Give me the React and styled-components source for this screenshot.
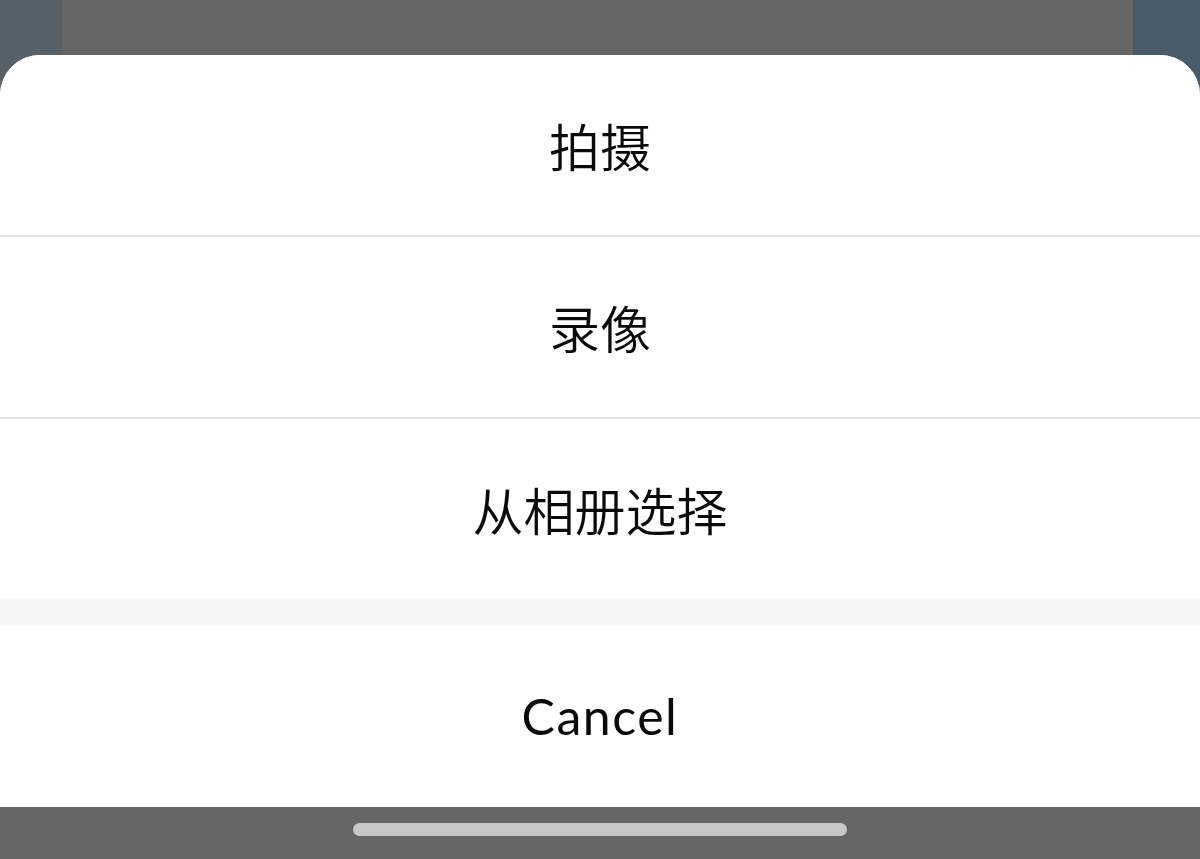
import styled, { createGlobalStyle } from "styled-components";

const GlobalStyle = createGlobalStyle`
  html, body {
    margin: 0;
    padding: 0;
    height: 100%;
  }
  body {
    font-family: "Noto Sans", "Noto Sans CJK SC", sans-serif;
  }
  #root {
    height: 100%;
  }
`;

const Page = styled.div`
  height: 859px;
  display: flex;
  flex-direction: column;
  overflow: hidden;
  background: linear-gradient(
    to right,
    #56616a 0,
    #56616a 62px,
    #666666 62px,
    #666666 1133px,
    #4a5b67 1133px
  );
`;

const Backdrop = styled.div`
  height: 55px;
  flex-shrink: 0;
`;

const Sheet = styled.div`
  flex: 1;
  display: flex;
  flex-direction: column;
  background: #ffffff;
  border-radius: 40px 40px 0 0;
  overflow: hidden;
`;

const Option = styled.button`
  height: ${(p) => p.$height}px;
  flex-shrink: 0;
  display: flex;
  align-items: center;
  justify-content: center;
  border: none;
  background: #ffffff;
  padding: 0;
  font-family: "Noto Sans CJK SC", sans-serif;
  font-size: 51px;
  font-weight: 350;
  color: #0a0a0a;
  cursor: pointer;

  & + & {
    border-top: 2px solid #e4e4e4;
  }
`;

const Spacer = styled.div`
  height: 26px;
  flex-shrink: 0;
  background: #f5f5f5;
`;

const CancelButton = styled(Option)`
  font-family: "Lato", "Noto Sans", sans-serif;
  font-size: 50px;
  font-weight: 400;
  letter-spacing: 1.5px;
`;

const HomeBar = styled.div`
  height: 52px;
  flex-shrink: 0;
  display: flex;
  align-items: center;
  justify-content: center;
  padding-bottom: 7px;
  box-sizing: border-box;
  background: #666666;
`;

const Indicator = styled.div`
  width: 494px;
  height: 13px;
  border-radius: 7px;
  background: #c8c8c8;
`;

const options = [
  { label: "拍摄", height: 180 },
  { label: "录像", height: 182 },
  { label: "从相册选择", height: 182 },
];

export default function App() {
  return (
    <>
      <GlobalStyle />
      <Page>
        <Backdrop />
        <Sheet>
          {options.map((o) => (
            <Option key={o.label} $height={o.height}>
              {o.label}
            </Option>
          ))}
          <Spacer />
          <CancelButton $height={182}>Cancel</CancelButton>
        </Sheet>
        <HomeBar>
          <Indicator />
        </HomeBar>
      </Page>
    </>
  );
}
